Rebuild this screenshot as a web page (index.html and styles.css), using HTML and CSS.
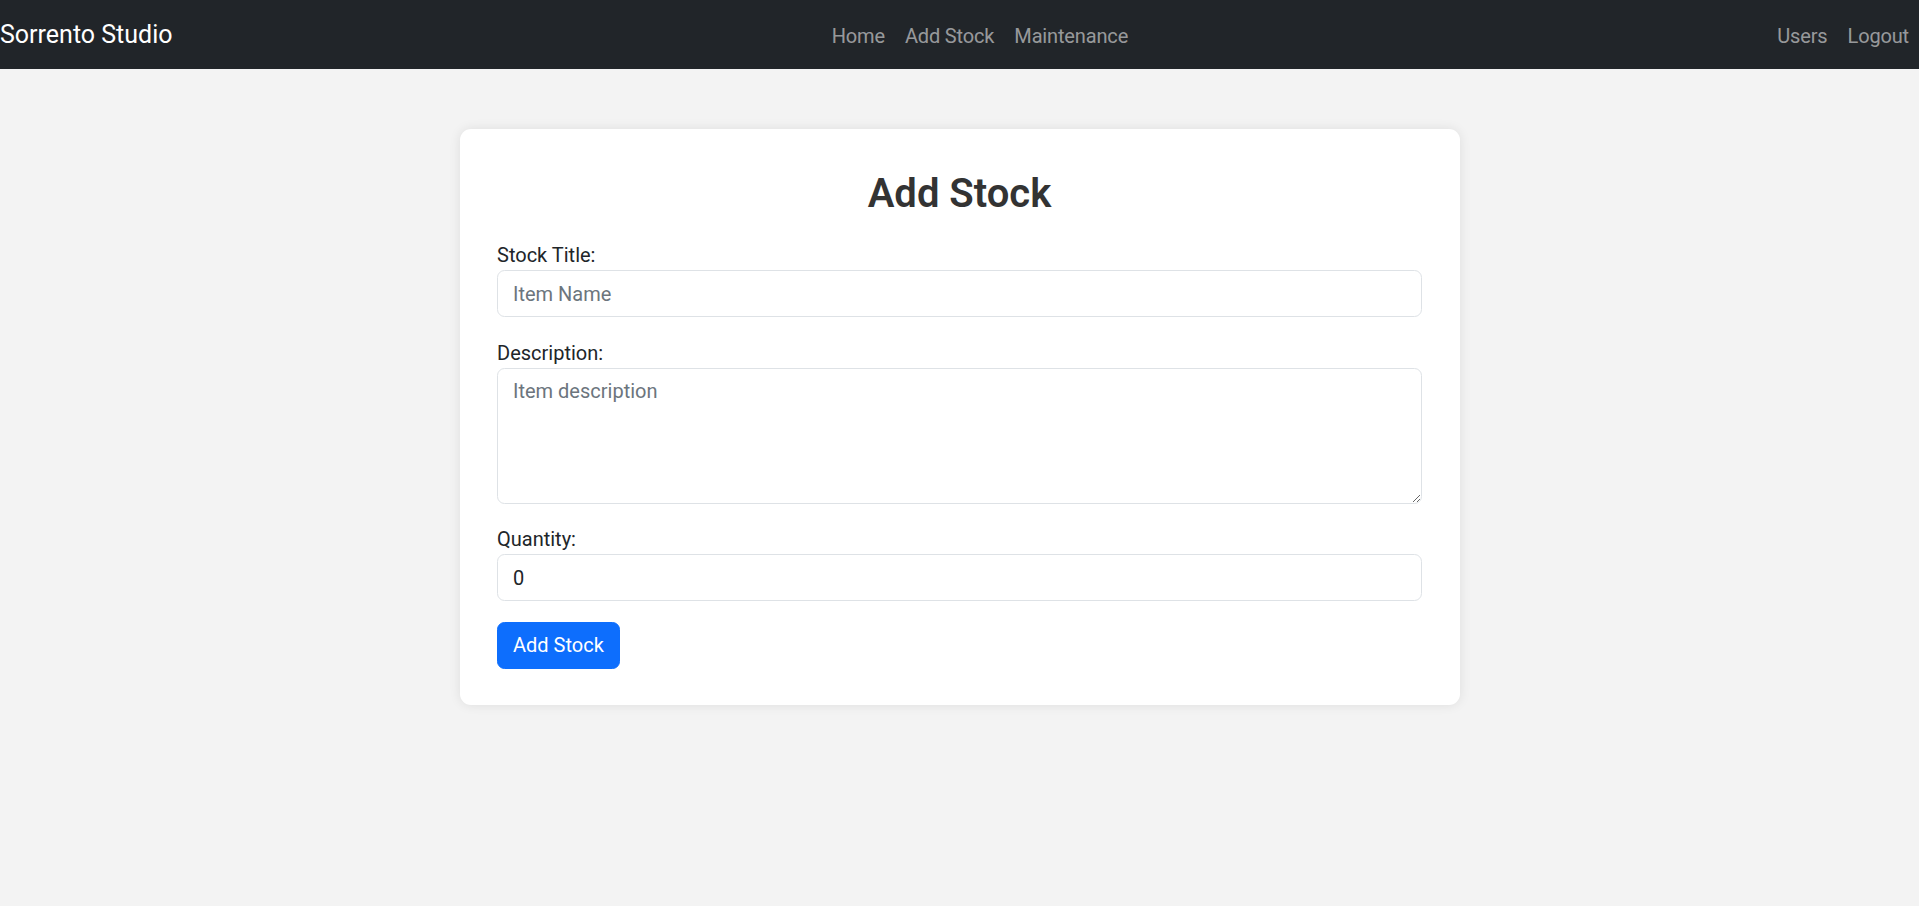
FILE: index.html
```html
<!DOCTYPE html>
<html lang="en">
<head>
<meta charset="utf-8">
<title>Add Stock - Sorrento Studio</title>
<link rel="stylesheet" href="styles.css">
</head>
<body>
<nav class="navbar">
  <a class="brand" href="#">Sorrento Studio</a>
  <ul class="nav nav-main">
    <li><a href="#">Home</a></li>
    <li><a href="#">Add Stock</a></li>
    <li><a href="#">Maintenance</a></li>
  </ul>
  <ul class="nav nav-right">
    <li><a href="#">Users</a></li>
    <li><a href="#">Logout</a></li>
  </ul>
</nav>
<main class="page">
  <section class="card">
    <h2 class="card-title">Add Stock</h2>
    <form class="form">
      <div class="field">
        <label for="title">Stock Title:</label>
        <input id="title" class="control" type="text" placeholder="Item Name">
      </div>
      <div class="field">
        <label for="desc">Description:</label>
        <textarea id="desc" class="control control-area" placeholder="Item description"></textarea>
      </div>
      <div class="field">
        <label for="qty">Quantity:</label>
        <input id="qty" class="control" type="number" value="0">
      </div>
      <button type="button" class="btn-primary">Add Stock</button>
    </form>
  </section>
</main>
</body>
</html>
```
FILE: styles.css
```css
* { box-sizing: border-box; }

html, body {
  margin: 0;
  padding: 0;
}

body {
  background: #f3f3f3;
  font-family: Roboto, "Liberation Sans", sans-serif;
  font-size: 20px;
  line-height: 1.5;
  color: #212529;
  min-height: 906px;
}

.navbar {
  display: flex;
  align-items: center;
  height: 69px;
  background: #212529;
}

.brand {
  color: #ffffff;
  text-decoration: none;
  font-size: 25px;
  line-height: 37.5px;
  margin-right: 20px;
  white-space: nowrap;
}

.nav {
  display: flex;
  list-style: none;
  margin: 0;
  padding: 0;
}

.nav-main {
  margin: 0 auto;
}

.nav a {
  display: block;
  padding: 3px 10px 0;
  color: rgba(255, 255, 255, 0.55);
  text-decoration: none;
  font-size: 20px;
  line-height: 30px;
  letter-spacing: -0.15px;
}

.page {
  display: flex;
  justify-content: center;
  padding-top: 60px;
}

.card {
  width: 1000px;
  background: #ffffff;
  border-radius: 11px;
  box-shadow: 0 0 12px rgba(0, 0, 0, 0.09);
  padding: 41px 37.5px 36px;
}

.card-title {
  margin: 0 0 22px;
  text-align: center;
  font-size: 40px;
  line-height: 48px;
  font-weight: 600;
  color: #333333;
}

.form {
  display: flex;
  flex-direction: column;
}

.field {
  display: flex;
  flex-direction: column;
  margin-bottom: 20.5px;
}

.field label {
  font-size: 20px;
  line-height: 30px;
  color: #212529;
}

.control {
  display: block;
  width: 100%;
  height: 47px;
  padding: 7.5px 15px;
  font-family: inherit;
  font-size: 20px;
  line-height: 30px;
  color: #212529;
  background: #ffffff;
  border: 1px solid #dee2e6;
  border-radius: 7.5px;
  outline: none;
  appearance: textfield;
  -moz-appearance: textfield;
}

.control::placeholder {
  color: #6c757d;
  opacity: 1;
}

.control::-webkit-outer-spin-button,
.control::-webkit-inner-spin-button {
  -webkit-appearance: none;
  margin: 0;
}

.control-area {
  height: 136px;
  resize: vertical;
}

.btn-primary {
  align-self: flex-start;
  height: 47px;
  padding: 7.5px 15px;
  font-family: inherit;
  font-size: 20px;
  line-height: 30px;
  color: #ffffff;
  background: #0d6efd;
  border: 1px solid #0d6efd;
  border-radius: 7.5px;
  cursor: pointer;
}
```
